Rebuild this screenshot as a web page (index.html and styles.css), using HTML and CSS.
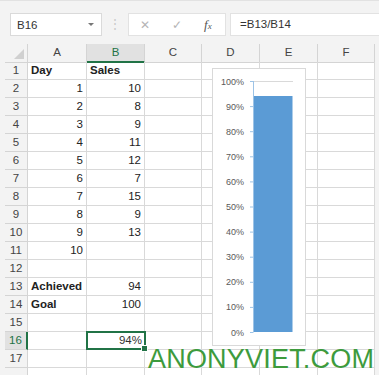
FILE: index.html
```html
<!DOCTYPE html>
<html lang="en">
<head>
    <meta charset="UTF-8">
    <title>Sheet</title>
    <link rel="stylesheet" href="styles.css">
</head>
<body>
    <div class="toolbar">
        <div class="namebox"><span>B16</span><span class="caret"></span></div>
        <div class="dots">⋮</div>
        <div class="fxbox">
            <span class="cancel">✕</span>
            <span class="enter">✓</span>
            <span class="fx">f<small>x</small></span>
        </div>
        <div class="formula">=B13/B14</div>
    </div>

    <div class="sheet">
        <div class="row head">
            <div class="corner"></div>
            <div class="ch">A</div><div class="ch active">B</div><div class="ch">C</div>
            <div class="ch">D</div><div class="ch">E</div><div class="ch">F</div>
        </div>
        <div class="row"><div class="rh">1</div><div class="c bold">Day</div><div class="c bold">Sales</div><div class="c"></div><div class="c"></div><div class="c"></div><div class="c"></div></div>
        <div class="row"><div class="rh">2</div><div class="c num">1</div><div class="c num">10</div><div class="c"></div><div class="c"></div><div class="c"></div><div class="c"></div></div>
        <div class="row"><div class="rh">3</div><div class="c num">2</div><div class="c num">8</div><div class="c"></div><div class="c"></div><div class="c"></div><div class="c"></div></div>
        <div class="row"><div class="rh">4</div><div class="c num">3</div><div class="c num">9</div><div class="c"></div><div class="c"></div><div class="c"></div><div class="c"></div></div>
        <div class="row"><div class="rh">5</div><div class="c num">4</div><div class="c num">11</div><div class="c"></div><div class="c"></div><div class="c"></div><div class="c"></div></div>
        <div class="row"><div class="rh">6</div><div class="c num">5</div><div class="c num">12</div><div class="c"></div><div class="c"></div><div class="c"></div><div class="c"></div></div>
        <div class="row"><div class="rh">7</div><div class="c num">6</div><div class="c num">7</div><div class="c"></div><div class="c"></div><div class="c"></div><div class="c"></div></div>
        <div class="row"><div class="rh">8</div><div class="c num">7</div><div class="c num">15</div><div class="c"></div><div class="c"></div><div class="c"></div><div class="c"></div></div>
        <div class="row"><div class="rh">9</div><div class="c num">8</div><div class="c num">9</div><div class="c"></div><div class="c"></div><div class="c"></div><div class="c"></div></div>
        <div class="row"><div class="rh">10</div><div class="c num">9</div><div class="c num">13</div><div class="c"></div><div class="c"></div><div class="c"></div><div class="c"></div></div>
        <div class="row"><div class="rh">11</div><div class="c num">10</div><div class="c"></div><div class="c"></div><div class="c"></div><div class="c"></div><div class="c"></div></div>
        <div class="row"><div class="rh">12</div><div class="c"></div><div class="c"></div><div class="c"></div><div class="c"></div><div class="c"></div><div class="c"></div></div>
        <div class="row"><div class="rh">13</div><div class="c bold">Achieved</div><div class="c num">94</div><div class="c"></div><div class="c"></div><div class="c"></div><div class="c"></div></div>
        <div class="row"><div class="rh">14</div><div class="c bold">Goal</div><div class="c num">100</div><div class="c"></div><div class="c"></div><div class="c"></div><div class="c"></div></div>
        <div class="row"><div class="rh">15</div><div class="c"></div><div class="c"></div><div class="c"></div><div class="c"></div><div class="c"></div><div class="c"></div></div>
        <div class="row"><div class="rh active">16</div><div class="c"></div><div class="c num selected">94%</div><div class="c"></div><div class="c"></div><div class="c"></div><div class="c"></div></div>
        <div class="row"><div class="rh">17</div><div class="c"></div><div class="c"></div><div class="c"></div><div class="c"></div><div class="c"></div><div class="c"></div></div>
        <div class="row"><div class="rh"></div><div class="c"></div><div class="c"></div><div class="c"></div><div class="c"></div><div class="c"></div><div class="c"></div></div>

        <!-- chart over D1:E16 -->
        <div class="chart">
            <svg width="94" height="278" viewBox="0 0 94 278">
                <line x1="41" y1="13.5" x2="81" y2="13.5" stroke="#d9d9d9" stroke-width="1"/>
                <rect x="41.5" y="28" width="39" height="236" fill="#5b9bd5"/>
                <line x1="41.5" y1="13" x2="41.5" y2="264.5" stroke="#9dc3e6" stroke-width="1"/>
                <g stroke="#9dc3e6" stroke-width="1">
                    <line x1="38" y1="13.5" x2="41" y2="13.5"/>
                    <line x1="38" y1="38.6" x2="41" y2="38.6"/>
                    <line x1="38" y1="63.7" x2="41" y2="63.7"/>
                    <line x1="38" y1="88.8" x2="41" y2="88.8"/>
                    <line x1="38" y1="113.9" x2="41" y2="113.9"/>
                    <line x1="38" y1="139" x2="41" y2="139"/>
                    <line x1="38" y1="164.1" x2="41" y2="164.1"/>
                    <line x1="38" y1="189.2" x2="41" y2="189.2"/>
                    <line x1="38" y1="214.3" x2="41" y2="214.3"/>
                    <line x1="38" y1="239.4" x2="41" y2="239.4"/>
                    <line x1="38" y1="264.5" x2="41" y2="264.5"/>
                </g>
                <g class="axis-label" text-anchor="end">
                    <text x="32" y="16.5">100%</text>
                    <text x="32" y="41.6">90%</text>
                    <text x="32" y="66.7">80%</text>
                    <text x="32" y="91.8">70%</text>
                    <text x="32" y="116.9">60%</text>
                    <text x="32" y="142">50%</text>
                    <text x="32" y="167.1">40%</text>
                    <text x="32" y="192.2">30%</text>
                    <text x="32" y="217.3">20%</text>
                    <text x="32" y="242.4">10%</text>
                    <text x="32" y="267.5">0%</text>
                </g>
            </svg>
        </div>

        <div class="watermark">ANONYVIET.COM</div>
    </div>
</body>
</html>
```

FILE: styles.css
```css
* {
    margin: 0;
    padding: 0;
    box-sizing: border-box;
}

html, body {
    height: 100%;
}

body {
    background: #f3f3f3;
    font-family: "Liberation Sans", Arial, sans-serif;
    font-size: 11.5px;
    color: #222;
    overflow: hidden;
}

/* barra de formulas */
.toolbar {
    height: 44px;
    border-top: 1px solid #e2e2e2;
    display: flex;
    align-items: flex-start;
    padding: 12px 0 0 10px;
}

.namebox {
    width: 92px;
    height: 23px;
    background: #fff;
    border: 1px solid #dadada;
    display: flex;
    align-items: center;
    justify-content: space-between;
    padding: 0 7px 0 6px;
    color: #333;
}

.caret {
    width: 0;
    height: 0;
    border-left: 3px solid transparent;
    border-right: 3px solid transparent;
    border-top: 3px solid #777;
}

.dots {
    width: 26px;
    height: 23px;
    line-height: 23px;
    text-align: center;
    color: #c8c8c8;
    font-size: 12px;
}

.fxbox {
    width: 98px;
    height: 23px;
    background: #fff;
    border: 1px solid #e2e2e2;
    display: flex;
    align-items: center;
    padding-left: 11px;
    color: #b5b5b5;
}

.cancel {
    font-size: 12px;
    width: 32px;
}

.enter {
    font-size: 12px;
    width: 32px;
}

.fx {
    font-family: "Liberation Serif", serif;
    font-style: italic;
    font-size: 13px;
    color: #555;
}

.fx small {
    font-size: 9px;
}

.formula {
    flex: 1;
    height: 23px;
    margin-left: 4px;
    background: #fff;
    border: 1px solid #e2e2e2;
    border-right: none;
    line-height: 21px;
    padding-left: 9px;
    color: #333;
}

/* hoja */
.sheet {
    position: relative;
    margin-left: 5px;
    width: 370px;
    background: #fff;
}

.row {
    display: grid;
    grid-template-columns: 23px 59px 58px 57px 58px 58px 57px;
    height: 18px;
}

.corner,
.ch,
.rh {
    background: #f3f3f3;
    border-right: 1px solid #d4d4d4;
    border-bottom: 1px solid #d4d4d4;
    color: #444;
    text-align: center;
    line-height: 17px;
}

.corner {
    position: relative;
}

.corner::after {
    content: '';
    position: absolute;
    right: 3px;
    bottom: 3px;
    border-left: 10px solid transparent;
    border-bottom: 10px solid #d0d0d0;
}

.ch.active {
    background: #e1e1e1;
    color: #217346;
    border-bottom: 2px solid #217346;
}

.rh.active {
    background: #e1e1e1;
    color: #217346;
    border-right: 2px solid #217346;
}

.c {
    border-right: 1px solid #d9d9d9;
    border-bottom: 1px solid #d9d9d9;
    line-height: 17px;
    padding: 0 3px;
    white-space: nowrap;
}

.bold {
    font-weight: bold;
}

.num {
    text-align: right;
}

.c.selected {
    position: relative;
    border: 2px solid #217346;
    margin: -1px 0 0 -1px;
    width: 60px;
    height: 19px;
    line-height: 15px;
    padding-right: 2px;
    color: #333;
}

.c.selected::after {
    content: '';
    position: absolute;
    right: -4px;
    bottom: -4px;
    width: 5px;
    height: 5px;
    background: #217346;
    border: 1px solid #fff;
}

.chart {
    position: absolute;
    left: 207px;
    top: 24px;
    width: 94px;
    height: 278px;
    background: #fff;
    border: 1px solid #d9d9d9;
}

.chart svg {
    display: block;
    margin: -1px;
}

.axis-label {
    font-family: "Liberation Sans", Arial, sans-serif;
    font-size: 9px;
    fill: #595959;
}

.watermark {
    position: absolute;
    left: 143px;
    top: 304px;
    font-family: "Liberation Sans", Arial, sans-serif;
    font-size: 27px;
    line-height: 22px;
    color: #3d9b3d;
    letter-spacing: 0.2px;
    white-space: nowrap;
}
```
